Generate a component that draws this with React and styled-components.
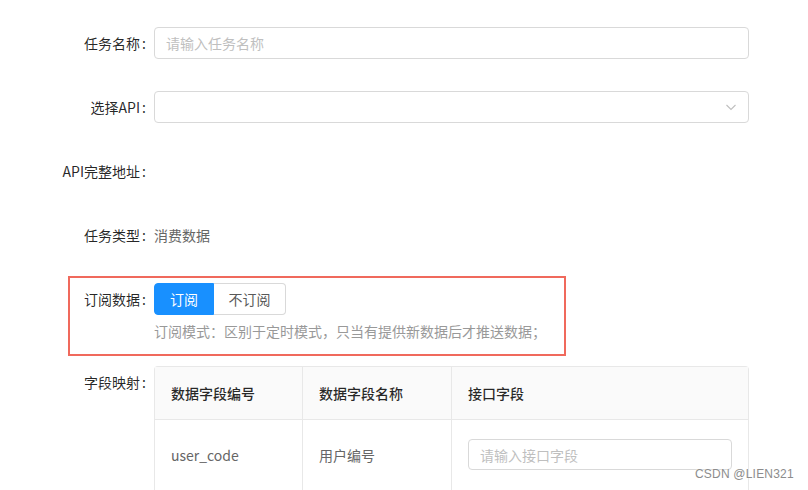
import React from "react";
import styled, { createGlobalStyle } from "styled-components";

const Global = createGlobalStyle`
  html, body { margin: 0; padding: 0; background: #fff; overflow: hidden; }
  body {
    font-family: "Noto Sans CJK SC", "Noto Sans", sans-serif;
    font-size: 14px;
    color: rgba(0,0,0,0.85);
  }
  * { box-sizing: border-box; }
`;

const Page = styled.div`
  position: relative;
  width: 808px;
  height: 490px;
  overflow: hidden;
`;

const Form = styled.div`
  display: flex;
  flex-direction: column;
  gap: 32px;
  padding-top: 27px;
`;

const Item = styled.div`
  position: relative;
  display: grid;
  grid-template-columns: 154px 595px;
  align-items: start;
  ${(p) => p.$tight && "margin-bottom: -8px;"}
  ${(p) =>
    p.$highlight &&
    `
    &::before {
      content: "";
      position: absolute;
      left: 68px;
      top: -7px;
      width: 494px;
      height: 76px;
      border: 2px solid #f0695c;
      pointer-events: none;
    }
  `}
`;

const Label = styled.label`
  height: 32px;
  line-height: 32px;
  text-align: right;
  white-space: nowrap;
  color: rgba(0,0,0,0.85);
  &::after {
    content: ":";
    margin: 0 8px 0 2px;
  }
`;

const Control = styled.div`
  display: flex;
  flex-direction: column;
`;

const Input = styled.div`
  height: 32px;
  border: 1px solid #d9d9d9;
  border-radius: 4px;
  padding: 0 11px;
  display: flex;
  align-items: center;
  justify-content: space-between;
  color: ${(p) => (p.$placeholder ? "#bfbfbf" : "rgba(0,0,0,0.65)")};
  background: #fff;
`;

const Text = styled.div`
  height: 32px;
  line-height: 32px;
  color: #666;
`;

const RadioGroup = styled.div`
  display: flex;
`;

const RadioBtn = styled.div`
  height: 32px;
  line-height: 30px;
  padding: 0;
  white-space: nowrap;
  border: 1px solid ${(p) => (p.$active ? "#1890ff" : "#d9d9d9")};
  background: ${(p) => (p.$active ? "#1890ff" : "#fff")};
  color: ${(p) => (p.$active ? "#fff" : "#595959")};
  width: ${(p) => p.$w}px;
  text-align: center;
  &:first-child { border-radius: 4px 0 0 4px; }
  &:last-child { border-radius: 0 4px 4px 0; border-left: none; }
`;

const Hint = styled.div`
  padding-top: 5px;
  line-height: 22px;
  color: #999;
`;

const Table = styled.div`
  border: 1px solid #e8e8e8;
  border-bottom: none;
  border-radius: 4px 4px 0 0;
  display: grid;
  grid-template-columns: 148px 149px 1fr;
`;

const Th = styled.div`
  height: 53px;
  display: flex;
  align-items: center;
  padding: 0 16px;
  background: #fafafa;
  font-weight: 500;
  color: rgba(0,0,0,0.85);
  border-bottom: 1px solid #e8e8e8;
  border-right: ${(p) => (p.$last ? "none" : "1px solid #e8e8e8")};
`;

const Td = styled.div`
  height: 80px;
  padding: 19px 16px;
  display: flex;
  align-items: flex-start;
  border-right: ${(p) => (p.$last ? "none" : "1px solid #e8e8e8")};
  color: #666;
`;

const CellText = styled.span`
  line-height: 32px;
`;

const CellInput = styled(Input)`
  width: 264px;
  height: 31px;
`;

const Watermark = styled.div`
  position: absolute;
  left: 695px;
  top: 467px;
  font-family: "Liberation Sans", Arial, sans-serif;
  font-size: 12px;
  color: #8c8c8c;
  text-shadow: 0 0 2px #fff, 0 0 1px #fff;
  letter-spacing: 0.2px;
`;

const Chevron = () => (
  <svg width="12" height="12" viewBox="0 0 12 12" fill="none">
    <path d="M1.5 4 L6 8.5 L10.5 4" stroke="#bfbfbf" strokeWidth="1.1" />
  </svg>
);

export default function App() {
  return (
    <Page>
      <Global />
      <Form>
        <Item>
          <Label>任务名称</Label>
          <Control>
            <Input $placeholder>请输入任务名称</Input>
          </Control>
        </Item>
        <Item>
          <Label>选择API</Label>
          <Control>
            <Input>
              <span />
              <Chevron />
            </Input>
          </Control>
        </Item>
        <Item>
          <Label>API完整地址</Label>
          <Control />
        </Item>
        <Item>
          <Label>任务类型</Label>
          <Control>
            <Text>消费数据</Text>
          </Control>
        </Item>
        <Item $highlight $tight>
          <Label>订阅数据</Label>
          <Control>
            <RadioGroup>
              <RadioBtn $active $w={60}>订阅</RadioBtn>
              <RadioBtn $w={72}>不订阅</RadioBtn>
            </RadioGroup>
            <Hint>订阅模式：区别于定时模式，只当有提供新数据后才推送数据；</Hint>
          </Control>
        </Item>
        <Item>
          <Label>字段映射</Label>
          <Control>
            <Table>
              <Th>数据字段编号</Th>
              <Th>数据字段名称</Th>
              <Th $last>接口字段</Th>
              <Td><CellText>user_code</CellText></Td>
              <Td><CellText>用户编号</CellText></Td>
              <Td $last>
                <CellInput $placeholder>请输入接口字段</CellInput>
              </Td>
            </Table>
          </Control>
        </Item>
      </Form>
      <Watermark>CSDN @LIEN321</Watermark>
    </Page>
  );
}
